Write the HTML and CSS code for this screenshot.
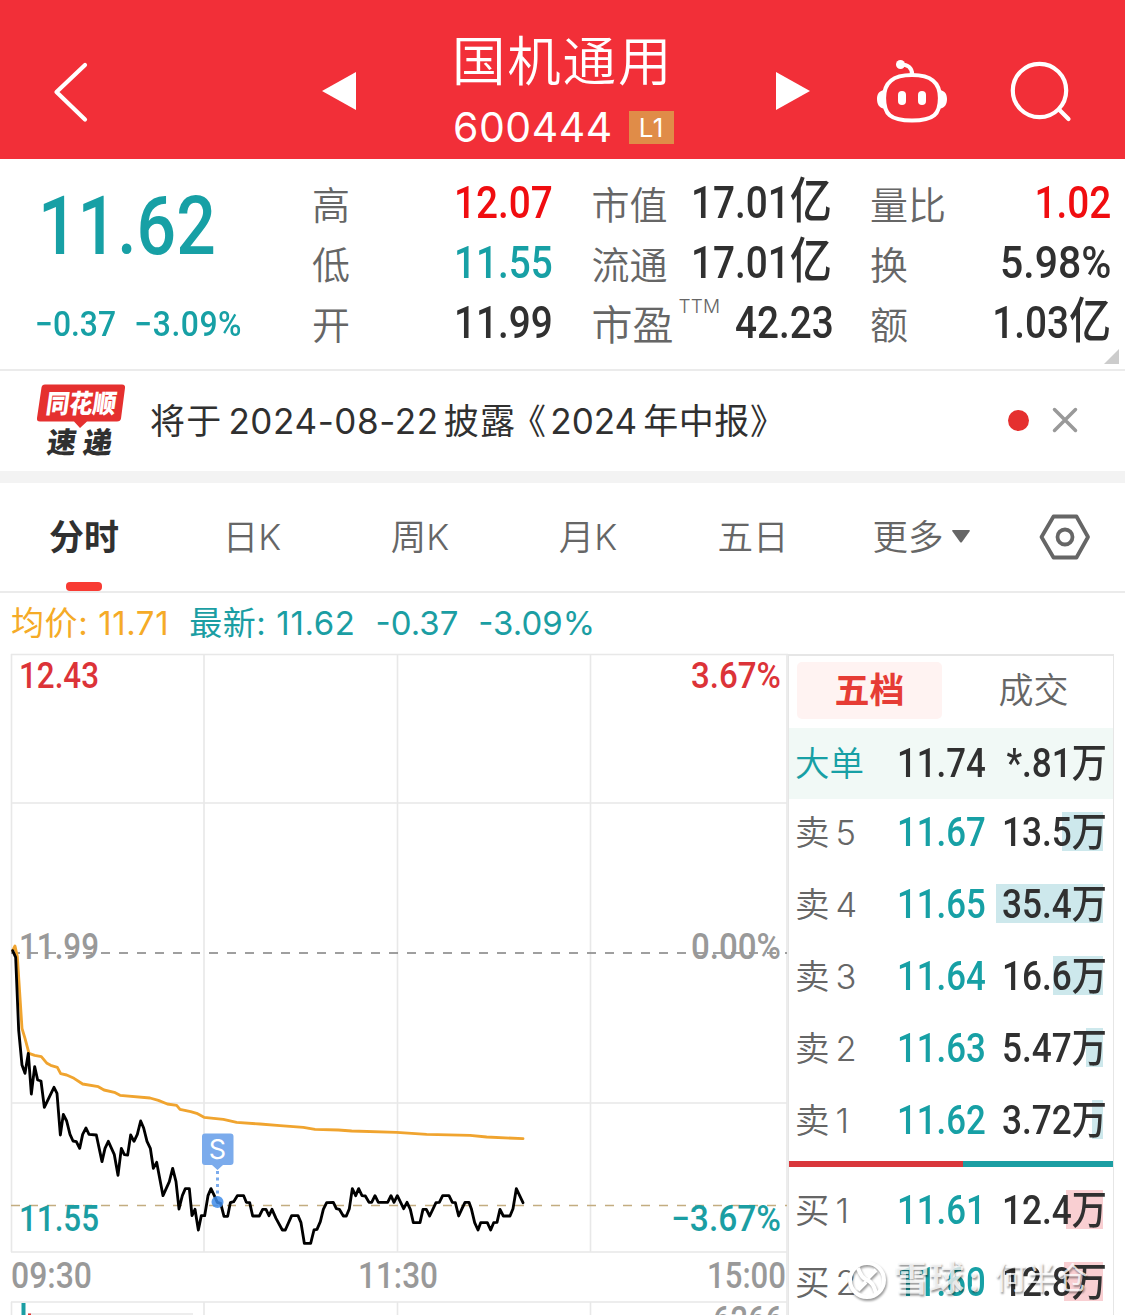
FILE: index.html
```html
<!DOCTYPE html>
<html lang="zh-CN">
<head>
    <meta charset="UTF-8">
    <meta name="viewport" content="width=device-width, initial-scale=1.0">
    <title>国机通用 600444</title>
    <link rel="stylesheet" href="styles.css">
</head>
<body>
<header class="top-bar">
    <svg class="back" width="40" height="66" viewBox="50 59 40 66"><path d="M85 65 56.500 92 85 119.500"/></svg>
    <svg class="prev" width="34" height="38" viewBox="0 0 34 38"><path d="M0 19 34 0V38z"/></svg>
    <div class="stock">
        <h1 class="stock-name">国机通用</h1>
        <div class="stock-code">600444 <span class="level">L1</span></div>
    </div>
    <svg class="next" width="34" height="38" viewBox="0 0 34 38"><path d="M34 19 0 0V38z"/></svg>
    <svg class="robot" width="72" height="66" viewBox="876 59 72 66">
        <path d="M912 75C931 75 940 82 940 98 940 114 934 120.500 912 120.500S884 114 884 98C884 82 893 75 912 75z"/>
        <path d="M912 74C912 68 908 64.500 901 64.500"/>
        <circle class="solid" cx="900.500" cy="64.500" r="4.500"/>
        <path class="solid" d="M884 90C879 91 877 94 877 99s2 9 7 9.500zM940 90c5 1 7 4 7 9s-2 9-7 9.500z"/>
        <rect class="solid" x="898" y="91" width="8" height="14" rx="4"/>
        <rect class="solid" x="918" y="91" width="8" height="14" rx="4"/>
    </svg>
    <svg class="search" width="64" height="66" viewBox="1009 59 64 66">
        <circle cx="1039.500" cy="90.500" r="26.700"/>
        <path d="M1059 109.500 1068.500 119"/>
    </svg>
</header>

<section class="quote">
    <div class="price-box">
        <div class="price num">11.62</div>
        <div class="change"><span class="num">−0.37</span><span class="num">−3.09%</span></div>
    </div>
    <div class="stats">
        <div class="stat"><span>高</span><b class="num red">12.07</b></div>
        <div class="stat"><span>市值</span><b class="num">17.01<i>亿</i></b></div>
        <div class="stat"><span>量比</span><b class="num red">1.02</b></div>
        <div class="stat"><span>低</span><b class="num teal">11.55</b></div>
        <div class="stat"><span>流通</span><b class="num">17.01<i>亿</i></b></div>
        <div class="stat"><span>换</span><b class="num percent">5.98%</b></div>
        <div class="stat"><span>开</span><b class="num">11.99</b></div>
        <div class="stat"><span class="pe">市盈<sup>TTM</sup></span><b class="num">42.23</b></div>
        <div class="stat"><span>额</span><b class="num">1.03<i>亿</i></b></div>
    </div>
    <div class="corner"></div>
</section>

<section class="news">
    <svg class="news-logo" width="92" height="76" viewBox="35 382 92 76">
        <path class="logo-box" d="M45 383.500H122Q125.500 383.500 125 387L121 417.500Q120.500 420.500 117 420.500H87L80 427 74 420.500H40Q36.500 420.500 37 417L41.500 386.500Q42 383.500 45 383.500z"/>
        <text class="logo-top" transform="translate(45 412) skewX(-8)" textLength="70" lengthAdjust="spacingAndGlyphs">同花顺</text>
        <text class="logo-bottom" transform="translate(46 452) skewX(-8)" textLength="65">速递</text>
    </svg>
    <p class="news-text"><span>将于</span><span class="latin date">2024-08-22</span><span>披露</span><span class="quote-l">《</span><span class="latin year">2024</span><span class="tail">年中报》</span></p>
    <span class="dot"></span>
    <svg class="close" width="26" height="26" viewBox="0 0 26 26"><path d="M2.500 2.500 23.500 23.500M23.500 2.500 2.500 23.500"/></svg>
</section>

<nav class="tabs">
    <a class="tab active">分时</a>
    <a class="tab">日K</a>
    <a class="tab">周K</a>
    <a class="tab">月K</a>
    <a class="tab">五日</a>
    <a class="tab more">更多<svg width="18" height="13" viewBox="0 0 18 13"><path d="M1 0H17Q18.500 0 17.500 1.500L10 12Q9 13 8 12L.5 1.500Q-.5 0 1 0z"/></svg></a>
    <a class="tab setting">
        <svg width="52" height="46" viewBox="0 0 52 46"><path d="M14.500 2.500H37.500L49 23 37.500 43.500H14.500L2.500 23z"/><circle cx="26" cy="23" r="7.500"/></svg>
    </a>
</nav>

<div class="summary">
    <span class="avg">均价: 11.71</span>
    <span class="last">最新: 11.62</span>
    <span>-0.37</span>
    <span>-3.09%</span>
</div>

<main class="panel">
    <svg class="chart" width="788" height="662" viewBox="0 653 788 662">
        <!-- grid -->
        <path class="grid" d="M11 654.500H788M11 803H787M11 1103H787M11 1252H787M11.500 654V1252M204 654V1252M397.500 654V1252M590.500 654V1252M787 654V1315"/>
        <path class="grid" d="M11 1302H787M11.500 1302V1315M204 1302V1315M397.500 1302V1315M590.500 1302V1315M28 1314H193"/>
        <path class="base" d="M11 953H787"/>
        <path class="low" d="M11 1205.500H787"/>

        <!-- average and price, three units per pixel -->
        <g transform="translate(0 920) scale(.33333)">
            <polyline class="avg-line" points="38,92 45,78 52,110 66,325 75,355 87,400 104,406 124,410 141,430 152,436 172,442 182,461 200,465 222,475 248,492 295,500 312,510 343,517 360,526 450,534 475,541 502,552 530,556 540,568 572,575 590,580 612,592 670,598 710,607 780,612 840,617 910,622 945,628 1015,630 1055,633 1190,637 1280,643 1410,646 1460,651 1569,656"/>
            <polyline class="price-line" points="38,92 47,112 56,330 66,435 75,460 85,400 94,522 104,440 113,480 123,483 133,562 162,502 171,520 181,645 190,583 200,603 210,643 219,663 229,665 239,685 248,643 258,624 267,643 289,645 306,725 315,685 325,664 343,704 354,766 364,685 373,704 383,705 392,645 402,664 412,643 422,603 431,624 441,664 451,685 460,745 470,727 489,827 508,785 518,745 528,785 537,867 547,827 556,806 568,806 576,887 585,868 595,930 604,887 614,887 624,827 633,806 643,827 652,847 662,850 672,889 683,889 691,848 701,845 712,827 731,827 739,847 749,848 758,888 778,888 788,868 798,868 807,887 816,868 828,895 847,930 856,930 875,887 894,887 903,908 913,970 932,970 942,930 951,928 961,905 970,868 980,848 1000,847 1009,866 1018,868 1030,888 1039,888 1048,866 1057,806 1067,827 1076,806 1086,827 1096,828 1107,847 1115,847 1125,827 1135,847 1163,847 1173,827 1182,847 1192,827 1211,866 1221,847 1231,868 1240,908 1260,908 1269,868 1279,868 1289,888 1308,848 1318,847 1328,827 1347,827 1357,847 1366,848 1376,888 1386,866 1395,847 1407,847 1414,866 1424,908 1434,930 1442,908 1462,908 1472,930 1481,908 1491,907 1500,868 1510,888 1530,888 1539,866 1549,806 1559,827 1569,848"/>
        </g>

        <!-- sell marker -->
        <path class="marker-dots" d="M217.500 1171V1195"/>
        <circle class="marker-point" cx="217.500" cy="1202" r="6"/>
        <path class="marker-box" d="M205 1133.500H230.500Q233.500 1133.500 233.500 1136.500V1162Q233.500 1165 230.500 1165H223L217.500 1170 212 1165H205Q202 1165 202 1162V1136.500Q202 1133.500 205 1133.500z"/>
        <text class="marker-text" x="217.500" y="1159">S</text>

        <text class="c-red" x="19" y="688" textLength="80" lengthAdjust="spacingAndGlyphs">12.43</text>
        <text class="c-red" x="691" y="688" textLength="90" lengthAdjust="spacingAndGlyphs">3.67%</text>
        <text x="19" y="959" textLength="80" lengthAdjust="spacingAndGlyphs">11.99</text>
        <text x="691" y="959" textLength="90" lengthAdjust="spacingAndGlyphs">0.00%</text>
        <text class="c-teal" x="19" y="1231" textLength="80" lengthAdjust="spacingAndGlyphs">11.55</text>
        <text class="c-teal" x="671" y="1231" textLength="110" lengthAdjust="spacingAndGlyphs">−3.67%</text>
        <text x="11" y="1288" textLength="81" lengthAdjust="spacingAndGlyphs">09:30</text>
        <text x="358" y="1288" textLength="80" lengthAdjust="spacingAndGlyphs">11:30</text>
        <text x="707" y="1288" textLength="79" lengthAdjust="spacingAndGlyphs">15:00</text>
        <text x="713" y="1332" textLength="70" lengthAdjust="spacingAndGlyphs">6266</text>

        <!-- volume -->
        <path class="vol-down" d="M23.500 1303V1315"/>
        <path class="vol-up" d="M28 1313.500H31V1315H28z"/>
    </svg>

    <div class="book">
        <div class="book-tabs">
            <span class="book-tab on">五档</span>
            <span class="book-tab">成交</span>
        </div>
        <div class="row big"><span class="side">大单</span><span class="num at">11.74</span><span class="num vol">*.81<i>万</i></span></div>
        <div class="sells">
            <div class="row"><span class="depth" style="width:41px"></span><span class="side">卖<em>5</em></span><span class="num at">11.67</span><span class="num vol">13.5<i>万</i></span></div>
            <div class="row"><span class="depth" style="width:107px"></span><span class="side">卖<em>4</em></span><span class="num at">11.65</span><span class="num vol">35.4<i>万</i></span></div>
            <div class="row"><span class="depth" style="width:50px"></span><span class="side">卖<em>3</em></span><span class="num at">11.64</span><span class="num vol">16.6<i>万</i></span></div>
            <div class="row"><span class="depth" style="width:17px"></span><span class="side">卖<em>2</em></span><span class="num at">11.63</span><span class="num vol">5.47<i>万</i></span></div>
            <div class="row"><span class="depth" style="width:11px"></span><span class="side">卖<em>1</em></span><span class="num at">11.62</span><span class="num vol">3.72<i>万</i></span></div>
        </div>
        <div class="ratio"><span style="width:174px"></span></div>
        <div class="buys">
            <div class="row"><span class="depth" style="width:37px"></span><span class="side">买<em>1</em></span><span class="num at">11.61</span><span class="num vol">12.4<i>万</i></span></div>
            <div class="row"><span class="depth" style="width:39px"></span><span class="side">买<em>2</em></span><span class="num at">11.60</span><span class="num vol">12.8<i>万</i></span></div>
        </div>
    </div>
</main>

<div class="watermark">
    <svg width="40" height="40" viewBox="0 0 40 40"><circle cx="20" cy="20" r="17"/><path d="M11 8C14 17 17 19 20 20S27 25 29 33M29 10 21 18M19 22 11 30"/></svg>
    <span class="wm-site">雪球</span><span class="wm-colon">:</span><span class="wm-user">何半仓</span>
</div>
</body>
</html>
```
FILE: styles.css
```css
* {
    box-sizing: border-box;
}

body {
    margin: 0;
    width: 1125px;
    height: 1315px;
    overflow: hidden;
    position: relative;
    background: #fff;
    color: #303030;
    font-family: Inter, "Noto Sans CJK SC", sans-serif;
}

i, em {
    font-style: normal;
}

.num {
    font-family: Roboto, "Noto Sans CJK SC", sans-serif;
    font-weight: 500;
    white-space: nowrap;
}

.red { color: #f00d10; }
.teal { color: #17a0a5; }

/* header */
.top-bar {
    display: flex;
    align-items: center;
    height: 159px;
    padding: 25px 0 0 50px;
    background: #f22f38;
}

.top-bar svg {
    flex: none;
    fill: none;
    stroke: #fff;
    stroke-width: 4.2;
    stroke-linecap: round;
    stroke-linejoin: round;
}

.top-bar .prev,
.top-bar .next {
    fill: #fff;
    stroke: none;
    margin-bottom: 2px;
}

.prev { margin-left: 232px; }
.next { margin-left: 102px; }
.robot { margin-left: 66px; }
.search { margin-left: 61px; }

.robot .solid {
    fill: #fff;
    stroke: none;
}

.stock {
    width: 220px;
    margin-left: 98px;
    align-self: flex-start;
    color: #fff;
}

.stock-name {
    margin: 2px 0 -2px -2px;
    font-size: 53.5px;
    font-weight: 350;
    line-height: 70px;
    letter-spacing: 1.8px;
    white-space: nowrap;
}

.stock-code {
    display: flex;
    align-items: center;
    height: 64px;
    margin-left: -1px;
    font-size: 41px;
    font-weight: 400;
    line-height: 62px;
    letter-spacing: 0.5px;
}

.level {
    width: 48px;
    height: 33px;
    margin-left: 16px;
    background: #e08c48;
    font-size: 26px;
    line-height: 33px;
    text-align: center;
}

/* quote */
.quote {
    display: flex;
    position: relative;
    height: 212px;
    border-bottom: 2px solid #ebebeb;
}

.price-box {
    width: 312px;
    padding: 20px 0 0 38px;
    color: #17a0a5;
}

.price {
    font-size: 81px;
    line-height: 96px;
    transform: scaleX(.86);
    transform-origin: left;
}

.change {
    display: flex;
    gap: 20px;
    margin: 29px 0 0 -3px;
    font-size: 35px;
    line-height: 42px;
    transform: scaleX(.91);
    transform-origin: left;
}

.change .num + .num {
    letter-spacing: 0.6px;
}

.stats {
    display: grid;
    grid-template-columns: 241px 240px 241px;
    column-gap: 38.5px;
    grid-auto-rows: 60px;
    padding-top: 14px;
}

.stat {
    display: flex;
    justify-content: space-between;
    align-items: center;
    font-size: 38px;
    line-height: 60px;
}

.stat span {
    margin-top: 3px;
    color: #666;
    font-weight: 350;
    white-space: nowrap;
}

.stat b {
    font-size: 45px;
    transform: scaleX(.86);
    transform-origin: right;
}

.stat b i {
    font-size: 49px;
    line-height: 50px;
}

.stat .percent {
    transform: scaleX(.91);
}

.stat .pe {
    font-size: 41px;
}

.pe sup {
    display: inline-block;
    width: 40px;
    margin-left: 5px;
    font-size: 19px;
    line-height: 20px;
    letter-spacing: 0.2px;
    vertical-align: 27px;
}

.corner {
    position: absolute;
    right: 6px;
    bottom: 5px;
    border-left: 15px solid transparent;
    border-bottom: 15px solid #ccc;
}

/* news */
.news {
    display: flex;
    align-items: center;
    height: 112px;
    padding-left: 35px;
    border-bottom: 12px solid #f3f3f3;
}

.logo-box { fill: #e5302f; }

.logo-top {
    fill: #fff;
    font-size: 26px;
    font-weight: 900;
}

.logo-bottom {
    fill: #303030;
    font-size: 29px;
    font-weight: 900;
}

.news-text {
    display: flex;
    width: 880px;
    margin: 0 0 0 23px;
    font-size: 35px;
    line-height: 50px;
    letter-spacing: 1.2px;
}

.latin { letter-spacing: 0.6px; }
.date { margin: 0 5px 0 6px; }
.quote-l { margin-left: -5px; }
.year { margin-left: 3px; letter-spacing: 0; }
.tail { margin-left: 6px; letter-spacing: 0.6px; }

.dot {
    width: 21px;
    height: 21px;
    margin: -1px 0 0 -22px;
    border-radius: 50%;
    background: #e5302f;
}

.close {
    margin: -2px 0 0 23px;
    stroke: #999;
    stroke-width: 3.5;
    stroke-linecap: round;
}

/* tabs */
.tabs {
    display: grid;
    grid-template-columns: 168px 168px 168px 168px 162px 174px 113px;
    height: 110px;
    border-bottom: 2px solid #ebebeb;
}

.tab {
    display: flex;
    position: relative;
    justify-content: center;
    align-items: center;
    padding-bottom: 5px;
    color: #666;
    font-size: 35.5px;
    font-weight: 350;
}

.tab.active {
    color: #303030;
    font-size: 35px;
    font-weight: 700;
}

.tab.active::after {
    content: "";
    position: absolute;
    left: 66px;
    bottom: 0;
    width: 36px;
    height: 9px;
    border-radius: 4px;
    background: #f83b33;
}

.more svg {
    margin: 4px 0 0 8px;
    fill: #666;
}

.tab.setting {
    padding-bottom: 0;
}

.setting svg {
    fill: none;
    stroke: #666;
    stroke-width: 3.8;
    stroke-linejoin: round;
}

.summary {
    display: flex;
    gap: 20px;
    height: 60px;
    padding: 0 11px;
    color: #1b9ea3;
    font-size: 33px;
    line-height: 60px;
}

.avg, .last {
    letter-spacing: 0.6px;
}

.avg { color: #f5ab27; }

/* chart */
.panel {
    display: flex;
    height: 662px;
    overflow: hidden;
}

.chart {
    flex: none;
}

.chart path,
.chart polyline {
    fill: none;
}

.grid { stroke: #e8e8e8; stroke-width: 1.6; }

.base, .low {
    stroke: #808080;
    stroke-width: 1.6;
    stroke-dasharray: 9 9;
}

.low { stroke: #c3ad80; }

.avg-line, .price-line {
    stroke: #f0a42f;
    stroke-width: 8.5;
    stroke-linejoin: round;
    stroke-linecap: round;
}

.price-line { stroke: #000; }

.chart .marker-box { fill: #7babec; }
.marker-point { fill: #3f8cea; opacity: .85; }

.marker-dots {
    stroke: #7babec;
    stroke-width: 3;
    stroke-dasharray: 3 3.500;
}

.chart text {
    fill: #999;
    font-family: Roboto, sans-serif;
    font-size: 36px;
    font-weight: 500;
}

.chart .marker-text {
    fill: #fff;
    font-family: Inter, sans-serif;
    font-size: 27px;
    font-weight: 400;
    text-anchor: middle;
}

.chart .c-red { fill: #dc3338; }
.chart .c-teal { fill: #1b9ea3; }
.vol-down { stroke: #1b9ea3; stroke-width: 4; }
.chart .vol-up { fill: #e5302f; }

/* order book */
.book {
    width: 326px;
    border: solid #e6e6e6;
    border-width: 2px 1px 0;
    margin-top: 1px;
}

.book-tabs {
    display: flex;
    height: 72px;
    padding: 6px 0 9px 8px;
}

.book-tab {
    flex: none;
    width: 145px;
    margin-right: 19px;
    border-radius: 5px;
    color: #666;
    font-size: 35px;
    font-weight: 350;
    line-height: 57px;
    text-align: center;
}

.book-tab.on {
    background: #fff3f2;
    color: #e63c35;
    font-weight: 700;
}

.row {
    display: flex;
    position: relative;
    align-items: center;
    height: 72px;
    padding: 0 6px;
}

.big {
    height: 71px;
    background: #f1f9f6;
}

.side {
    flex: none;
    width: 102px;
    margin-top: -5px;
    color: #666;
    font-size: 34.5px;
    font-weight: 350;
    white-space: nowrap;
}

.side em {
    margin-left: 6px;
}

.at {
    flex: none;
    width: 98px;
    color: #17a0a5;
    font-size: 40px;
    transform: scaleX(.87);
    transform-origin: left;
}

/* the box is wider than the scaled amount, so it starts under the price */
.vol {
    flex: none;
    width: 124px;
    margin: -7px 0 0 -12px;
    font-size: 40px;
    text-align: right;
    transform: scaleX(.88);
    transform-origin: right;
}

.big .side { color: #17a0a5; }
.big .at { color: #303030; }

.sells { margin-top: -3px; }

/* volume bar, lies behind the amount */
.depth {
    position: absolute;
    right: 10px;
    top: 16px;
    height: 39px;
    background: #cde8ec;
}

.buys .depth { background: #f9cfd2; }

.ratio {
    height: 6px;
    margin: 5px 0 7px;
    background: #1b9ea3;
}

.ratio span {
    display: block;
    height: 6px;
    background: #d9373b;
}

.watermark {
    display: flex;
    position: absolute;
    left: 847px;
    top: 1260px;
    align-items: center;
    height: 40px;
    color: rgba(255, 255, 255, .8);
    font-size: 35px;
    font-weight: 700;
    line-height: 40px;
    text-shadow: 1px 2px 2px rgba(0, 0, 0, .4);
}

.watermark span {
    margin-top: -4px;
}

.watermark svg {
    fill: none;
    stroke: #fff;
    stroke-width: 4;
    filter: drop-shadow(1px 2px 1px rgba(0, 0, 0, .4));
}

.wm-site { margin-left: 7px; }
.wm-colon { width: 27px; margin-left: 4px; }

.watermark .wm-user {
    font-size: 31px;
    font-weight: 400;
}
```
